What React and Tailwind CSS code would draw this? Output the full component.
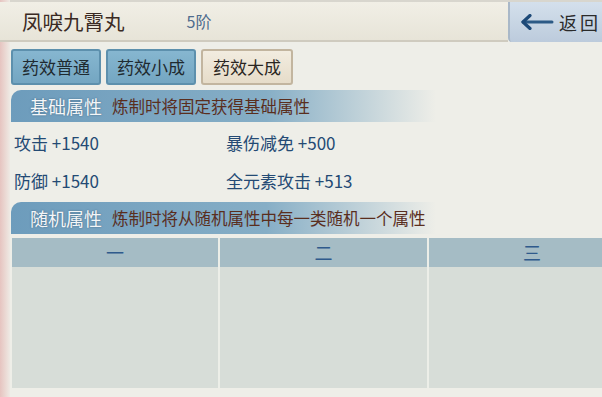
import React from 'react';

const font = { fontFamily: '"Noto Sans CJK SC", "Noto Sans", sans-serif' };

const tabs = [
  { label: '药效普通', active: true },
  { label: '药效小成', active: true },
  { label: '药效大成', active: false },
];

const baseStats = [
  ['攻击 +1540', '暴伤减免 +500'],
  ['防御 +1540', '全元素攻击 +513'],
];

const SectionBar = ({ title, hint }) => (
  <div className="flex items-center h-[32px] rounded-tl-[10px] bg-gradient-to-r from-[#6d9cbc] via-[#86aec6] via-60% to-transparent w-[425px]">
    <span className="ml-[19px] text-[18px] text-[#f4f6f8] [text-shadow:0_0_2px_#3d6482]">{title}</span>
    <span className="ml-[10px] text-[16.5px] text-[#5a2e1e] whitespace-nowrap">{hint}</span>
  </div>
);

export default function App() {
  return (
    <div className="w-[602px] h-[397px] bg-[#eeeee8] flex overflow-hidden" style={font}>
      {/* pink left rim */}
      <div className="w-[10px] shrink-0 bg-gradient-to-r from-[#e6c4c0] to-[#eeeae4]" />
      <div className="flex-1 flex flex-col min-w-0">
        {/* header */}
        <div className="h-[42px] flex border-t-2 border-[#d8d6ce]">
          <div className="flex-1 min-w-0 flex items-center bg-gradient-to-b from-[#f1efe6] to-[#e7e4d8] border-b-2 border-[#cfcbbf] -ml-[10px] pl-[22px]">
            <span className="text-[20.5px] text-[#3a2a24]">凤唳九霄丸</span>
            <span className="ml-[62px] text-[16px] text-[#4f6c8e]">5阶</span>
          </div>
          <div className="w-[94px] shrink-0 flex items-center whitespace-nowrap overflow-hidden bg-gradient-to-b from-[#d4e0ec] to-[#bccbdc] border-l-2 border-[#a9b8c8] rounded-bl-[4px]">
            <svg width="34" height="16" viewBox="0 0 34 16" className="ml-[10px] shrink-0">
              <path d="M3 8 H32" stroke="#2c5a86" strokeWidth="3" strokeLinecap="round" />
              <path d="M10 1.5 L3 8 L10 14.5" stroke="#1e4a78" strokeWidth="3.2" fill="none" strokeLinecap="round" strokeLinejoin="round" />
            </svg>
            <span className="ml-[5px] text-[18px] text-[#2a2a2a] tracking-[3px]">返回</span>
          </div>
        </div>

        {/* tabs */}
        <div className="flex gap-[5px] mt-[7px] ml-[1px]">
          {tabs.map((t) => (
            <div
              key={t.label}
              className={
                t.active
                  ? 'w-[90px] h-[36px] flex items-center justify-center rounded-[3px] border-2 border-[#5d90ad] bg-gradient-to-b from-[#86b6d0] to-[#74a6c2] text-[17px] text-[#1f2a30]'
                  : 'w-[92px] h-[36px] flex items-center justify-center rounded-[3px] border-2 border-[#c2b59f] bg-gradient-to-b from-[#f2ece0] to-[#e6dcc9] text-[17px] text-[#2a2622]'
              }
            >
              {t.label}
            </div>
          ))}
        </div>

        {/* base stats */}
        <div className="mt-[5px] ml-[1px]">
          <SectionBar title="基础属性" hint="炼制时将固定获得基础属性" />
        </div>
        <div className="flex flex-col gap-[15px] mt-[9px] ml-[4px] text-[17px] text-[#244a74]">
          {baseStats.map((row) => (
            <div key={row[0]} className="flex h-[23px] items-center">
              <span className="w-[212px]">{row[0]}</span>
              <span>{row[1]}</span>
            </div>
          ))}
        </div>

        {/* random stats */}
        <div className="mt-[10px] ml-[1px]">
          <SectionBar title="随机属性" hint="炼制时将从随机属性中每一类随机一个属性" />
        </div>
        <div className="flex-1 flex flex-col mt-[4px] ml-[2px] mb-[9px] overflow-hidden">
          <div className="grid grid-cols-[206px_207px_206px] gap-x-[2px] flex-1 bg-[#eceee8]">
            {['一', '二', '三'].map((h) => (
              <div key={h} className="flex flex-col">
                <div className="h-[29px] bg-[#a5bcc5] flex items-center justify-center text-[18px] text-[#2f5a8c]">{h}</div>
                <div className="flex-1 bg-[#d7ddd8]" />
              </div>
            ))}
          </div>
        </div>
      </div>
    </div>
  );
}
